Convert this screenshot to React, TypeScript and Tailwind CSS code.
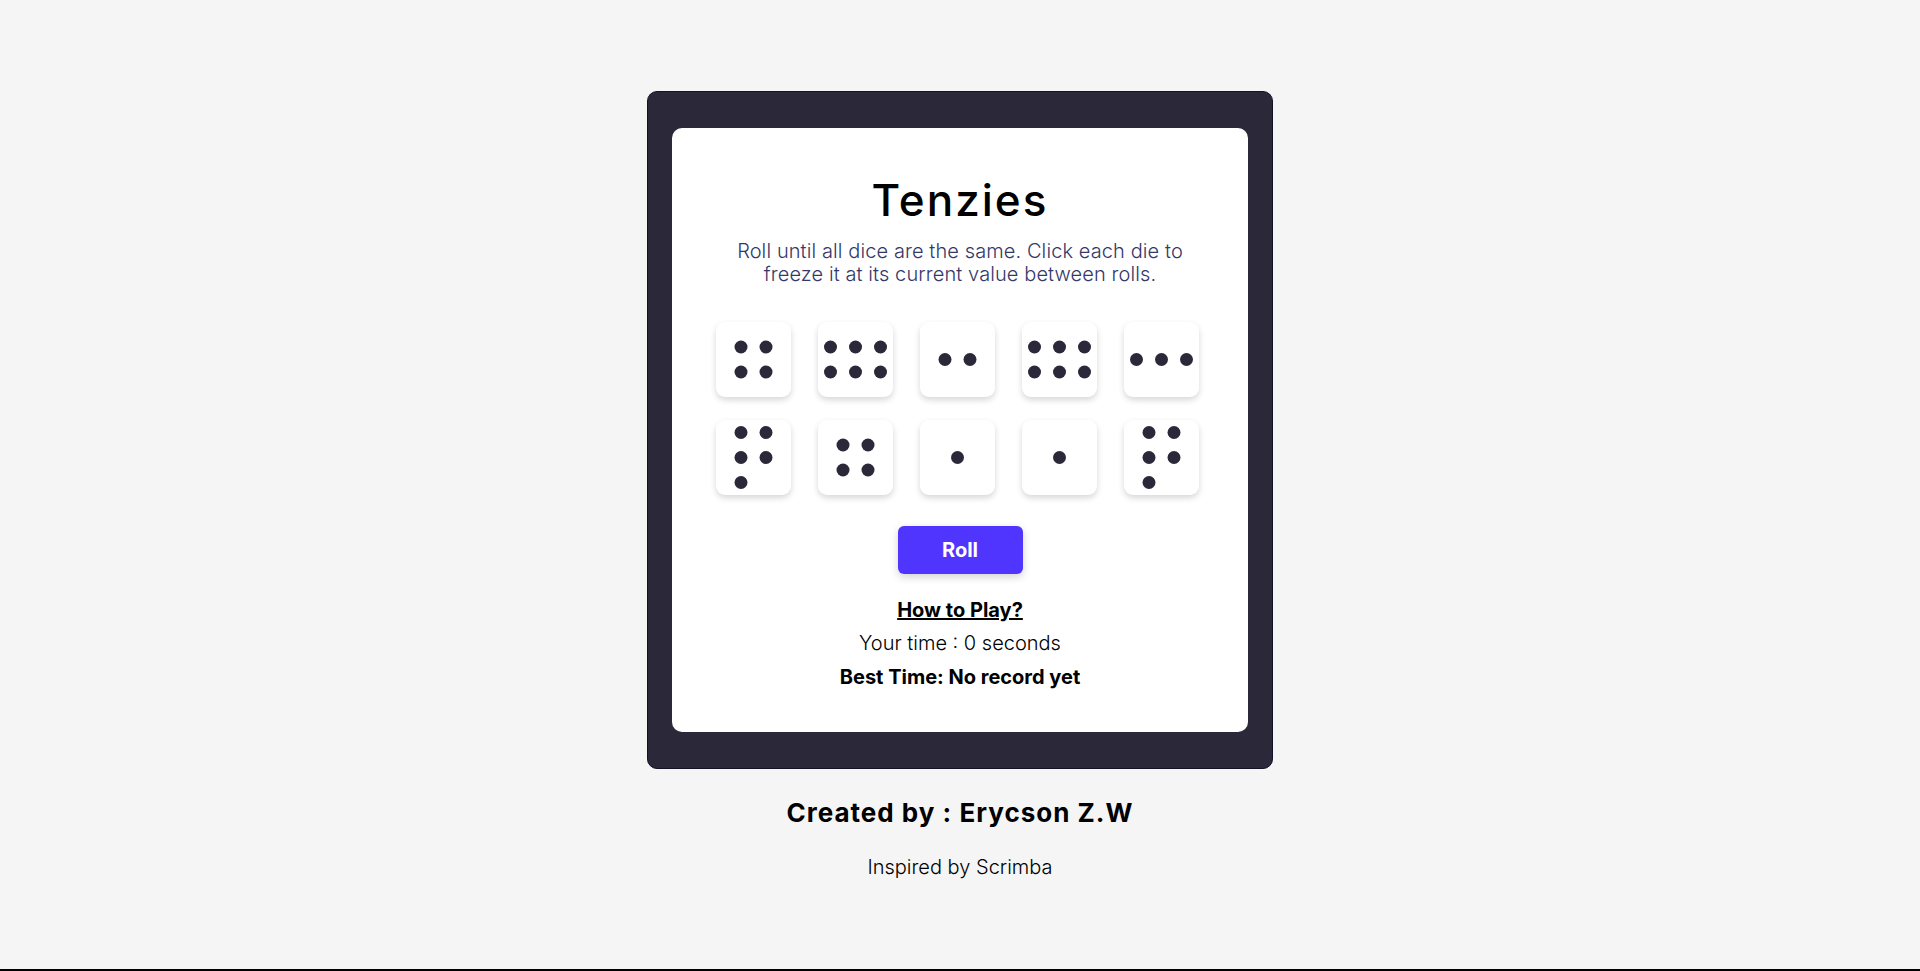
import React from "react";

const PIPS: Record<number, [number, number][]> = {
  1: [[37.5, 37.5]],
  2: [[25, 37.5], [50, 37.5]],
  3: [[12.5, 37.5], [37.5, 37.5], [62.5, 37.5]],
  4: [[25, 25], [50, 25], [25, 50], [50, 50]],
  5: [[25, 12.5], [50, 12.5], [25, 37.5], [50, 37.5], [25, 62.5]],
  6: [[12.5, 25], [37.5, 25], [62.5, 25], [12.5, 50], [37.5, 50], [62.5, 50]],
};

function Die({ value }: { value: number }) {
  return (
    <button className="w-[75px] h-[75px] rounded-[9px] bg-white shadow-[0_3px_6px_rgba(0,0,0,0.16)]">
      <svg width="75" height="75" viewBox="0 0 75 75">
        {PIPS[value].map(([x, y], i) => (
          <circle key={i} cx={x} cy={y} r="6.5" fill="#2b283a" />
        ))}
      </svg>
    </button>
  );
}

const dice = [4, 6, 2, 6, 3, 5, 4, 1, 1, 5];

export default function App() {
  return (
    <div className="min-h-[971px] bg-[#f5f5f5] border-b-2 border-black flex flex-col items-center pt-[91px] font-['Inter',sans-serif]">
      <main className="w-[626px] h-[678px] bg-[#2b283a] rounded-[10px] border border-[#141226] px-[24px] py-[36px]">
        <div className="bg-white rounded-[10px] h-full flex flex-col items-center pt-[50px]">
          <h1 className="text-[44px] leading-none font-medium tracking-[2px] text-black">Tenzies</h1>
          <p className="mt-[18px] w-[470px] text-center text-[20px] font-light tracking-[0.1px] leading-[23px] text-[#34386a]">
            Roll until all dice are the same. Click each die to freeze it at its current value between rolls.
          </p>
          <div className="mt-[36px] mr-[5px] grid grid-cols-[repeat(5,75px)] gap-x-[27px] gap-y-[23px]">
            {dice.map((v, i) => (
              <Die key={i} value={v} />
            ))}
          </div>
          <button className="mt-[31px] w-[125px] h-[48px] rounded-[6px] bg-[#5035ff] text-white text-[20px] font-bold shadow-[0_3px_8px_rgba(0,0,0,0.18)]">
            Roll
          </button>
          <a className="mt-[23px] text-[20px] font-bold underline text-black leading-[26px] cursor-pointer">How to Play?</a>
          <p className="mt-[7px] text-[20px] font-light leading-[26px] text-black">Your time : 0 seconds</p>
          <p className="mt-[8px] text-[20px] leading-[26px] font-bold text-black">Best Time: No record yet</p>
        </div>
      </main>
      <h2 className="mt-[28px] text-[26px] font-bold tracking-[1px] text-black leading-[32px]">Created by : Erycson Z.W</h2>
      <p className="mt-[26px] text-[20px] font-light leading-[24px] text-black">Inspired by Scrimba</p>
    </div>
  );
}
